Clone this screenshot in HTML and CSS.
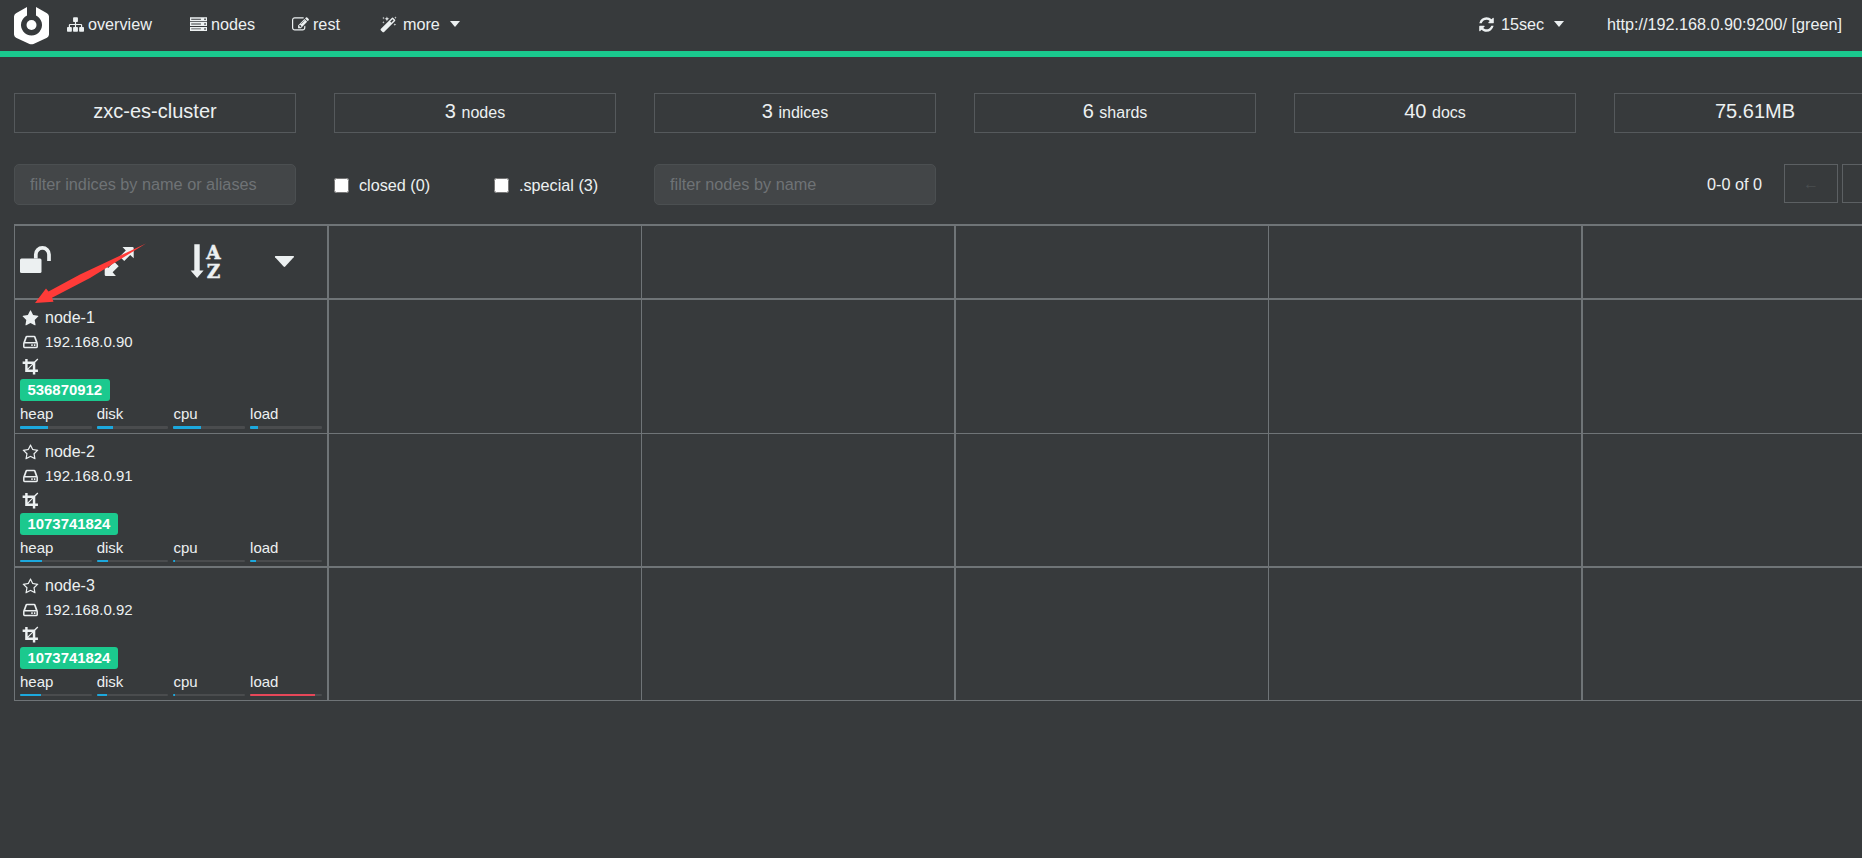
FILE: index.html
```
<!DOCTYPE html>
<html lang="en">
<head>
<meta charset="utf-8">
<title>cerebro</title>
<link rel="stylesheet" href="styles.css">
</head>
<body>
<svg class="defs" width="0" height="0">
  <symbol id="sitemap" viewBox="0 0 1792 1792"><path d="M1792 1248v320q0 40-28 68t-68 28h-320q-40 0-68-28t-28-68v-320q0-40 28-68t68-28h96v-192h-512v192h96q40 0 68 28t28 68v320q0 40-28 68t-68 28h-320q-40 0-68-28t-28-68v-320q0-40 28-68t68-28h96v-192h-512v192h96q40 0 68 28t28 68v320q0 40-28 68t-68 28h-320q-40 0-68-28t-28-68v-320q0-40 28-68t68-28h96v-192q0-52 38-90t90-38h512v-192h-96q-40 0-68-28t-28-68v-320q0-40 28-68t68-28h320q40 0 68 28t28 68v320q0 40-28 68t-68 28h-96v192h512q52 0 90 38t38 90v192h96q40 0 68 28t28 68z"/></symbol>
  <symbol id="server" viewBox="0 0 1792 1792"><path fill-rule="evenodd" d="M0 128h1792v416H0zM0 640h1792v416H0zM0 1152h1792v416H0zM128 288v96h1024v-96zM128 800v96h1024v-96zM128 1312v96h1024v-96zM1504 256h160v160h-160zM1504 768h160v160h-160zM1504 1280h160v160h-160z"/></symbol>
  <symbol id="edit" viewBox="0 0 1792 1792"><path d="M888 1184l116-116-152-152-116 116v56h96v96h56zm440-720q-16-16-33 1l-350 350q-17 17-1 33t33-1l350-350q17-17 1-33zm80 594v190q0 119-84.500 203.500t-203.500 84.500h-832q-119 0-203.500-84.500t-84.500-203.500v-832q0-119 84.500-203.500t203.500-84.500h832q63 0 117 25 15 7 18 23 3 17-9 29l-49 49q-14 14-32 8-23-6-45-6h-832q-66 0-113 47t-47 113v832q0 66 47 113t113 47h832q66 0 113-47t47-113v-126q0-13 9-22l64-64q15-15 35-7t20 29zm-96-738l288 288-672 672h-288v-288zm444 132l-92 92-288-288 92-92q28-28 68-28t68 28l152 152q28 28 28 68t-28 68z"/></symbol>
  <symbol id="magic" viewBox="0 0 16 16"><path fill-rule="evenodd" d="M11.300 1.700q.5-.4 1 0l1.900 1.900q.4.500 0 1L3.600 15.200q-.5.400-1 0L.7 13.300q-.4-.5 0-1zM11.800 3L9.600 5.200l1.100 1.100 2.200-2.200zM3.200.600l.3 1 1 .3-1 .3-.3 1-.3-1-1-.3 1-.3zM6.500.500l.7 1.600 1.600.6-1.600.6-.7 1.600-.6-1.600-1.700-.6 1.700-.6zM3.200 4.600l.3 1 1 .3-1 .3-.3 1-.3-1-1-.3 1-.3zM14.500.300l.3 1 1 .3-1 .3-.3 1-.3-1-1-.3 1-.3zM14 6.800l.3 1 1 .3-1 .3-.3 1-.3-1-1-.3 1-.3z"/></symbol>
  <symbol id="refresh" viewBox="0 0 1792 1792"><path d="M1639 1056q0 5-1 7-64 268-268 434.500t-478 166.500q-146 0-282.500-55t-243.500-157l-129 129q-19 19-45 19t-45-19-19-45v-448q0-26 19-45t45-19h448q26 0 45 19t19 45-19 45l-137 137q71 66 161 102t187 36q134 0 250-65t186-179q11-17 53-117 8-23 30-23h192q13 0 22.500 9.500t9.500 22.500zm25-800v448q0 26-19 45t-45 19h-448q-26 0-45-19t-19-45 19-45l138-138q-148-137-349-137-134 0-250 65t-186 179q-11 17-53 117-8 23-30 23h-199q-13 0-22.500-9.500t-9.500-22.500v-7q65-268 270-434.500t480-166.500q146 0 284 55.500t245 156.500l130-129q19-19 45-19t45 19 19 45z"/></symbol>
  <symbol id="star" viewBox="0 0 1792 1792"><path d="M1728 647q0 22-26 48l-363 354 86 500q1 7 1 20 0 21-10.500 35.500t-30.500 14.500q-19 0-40-12l-449-236-449 236q-22 12-40 12-21 0-31.500-14.500t-10.500-35.500q0-6 2-20l86-500-364-354q-25-27-25-48 0-37 56-46l502-73 225-455q19-41 49-41t49 41l225 455 502 73q56 9 56 46z"/></symbol>
  <symbol id="star-o" viewBox="0 0 1792 1792"><path d="M1201 1004l306-297-422-62-189-382-189 382-422 62 306 297-73 421 378-199 377 199zm527-357q0 22-26 48l-363 354 86 500q1 7 1 20 0 50-41 50-19 0-40-12l-449-236-449 236q-22 12-40 12-21 0-31.500-14.500t-10.500-35.500q0-6 2-20l86-500-364-354q-25-27-25-48 0-37 56-46l502-73 225-455q19-41 49-41t49 41l225 455 502 73q56 9 56 46z"/></symbol>
  <symbol id="hdd" viewBox="0 0 16 16"><path fill-rule="evenodd" d="M3.200 2.700Q3.500 1.700 4.600 1.700h6.800q1.100 0 1.400 1l1.900 5q.3.700.3 1.400v2.800q0 1.400-1.400 1.400H2.400Q1 13.300 1 11.900V9.100q0-.7.3-1.400zM4.700 3.100L3.100 7.500h9.800l-1.600-4.400zM2.400 8.900v3h11.200v-3zM8.700 9.700h1.400v1.500H8.700zM11.200 9.700h1.400v1.500h-1.400z"/></symbol>
  <symbol id="crop" viewBox="0 0 16 16"><path fill-rule="evenodd" d="M3 1h2.300v2.300h6.200L14.500.500l.8.800-2.800 3v6.500H15v2.300h-2.500v2.400h-2.300v-2.400H3V5.600H.6V3.300H3zM5.300 5.600v4.200l4.200-4.200zM10.200 6.400l-4.300 4.400h4.300z"/></symbol>
</svg>

<nav class="navbar">
  <svg class="logo" width="36" height="38" viewBox="0 0 36 38"><path fill="#fff" d="M13 0L2 6.300Q0 7.500 0 9.500v18q0 2 2 3.200l13.500 6.200q2 .9 4 0L33 30.700q2-1.200 2-3.200v-18q0-2-2-3.200L22 0v8.500a10.500 10.500 0 1 1-9 0z"/><circle cx="17.500" cy="18" r="5" fill="#fff"/></svg>
  <a class="item overview"><svg class="ico"><use href="#sitemap"/></svg>overview</a>
  <a class="item nodes"><svg class="ico"><use href="#server"/></svg>nodes</a>
  <a class="item rest"><svg class="ico"><use href="#edit"/></svg>rest</a>
  <a class="item more"><svg class="ico"><use href="#magic"/></svg>more<i class="caret"></i></a>
  <a class="item interval"><svg class="ico"><use href="#refresh"/></svg>15sec<i class="caret"></i></a>
  <a class="item host">http://192.168.0.90:9200/ [green]</a>
</nav>

<main>
  <section class="stats">
    <div class="stat">zxc-es-cluster</div>
    <div class="stat">3 <small>nodes</small></div>
    <div class="stat">3 <small>indices</small></div>
    <div class="stat">6 <small>shards</small></div>
    <div class="stat">40 <small>docs</small></div>
    <div class="stat">75.61MB</div>
  </section>

  <section class="filters">
    <input class="field" placeholder="filter indices by name or aliases">
    <label class="check"><input type="checkbox">closed (0)</label>
    <label class="check"><input type="checkbox">.special (3)</label>
    <input class="field" placeholder="filter nodes by name">
    <div class="pager"><span>0-0 of 0</span><button>←</button><button></button></div>
  </section>

  <section class="grid">
    <div class="row head">
      <div class="cell tools">
        <svg width="312" height="72" viewBox="15 226 312 72">
          <rect x="20" y="258.500" width="21.500" height="14.500" rx="1.500"/>
          <path d="M35.800 258.500v-4a6.600 6.600 0 0 1 13.200 0v6.500" fill="none" stroke="#ecf0f1" stroke-width="3.700"/>
          <path d="M122.500 247h10q1.200 0 1.200 1.200v10l-3.500-3.200-6 6.100-4.500-4.500 6.100-6zM106 276q-1.300 0-1.300-1.300v-10l3.500 3.200 6-6.100 4.500 4.500-6.100 6 3.300 3.700z"/>
          <path d="M194.300 244.300h5.400v26.200h3.900l-6.500 7.500-6.500-7.500h3.700z"/>
          <text class="letter" x="213.500" y="258.700" text-anchor="middle">A</text>
          <text class="letter" x="213.500" y="277.700" text-anchor="middle">Z</text>
          <path d="M275.500 256h18q1 .3.200 1.200l-8.500 9.300q-.8.800-1.600 0l-8.500-9.300q-.7-.9.400-1.200z"/>
        </svg>
      </div>
      <div class="cell"></div><div class="cell"></div><div class="cell"></div><div class="cell"></div><div class="cell"></div>
    </div>
    <div class="row r1">
      <div class="cell node">
        <div class="line name"><svg class="ico"><use href="#star"/></svg>node-1</div>
        <div class="line"><svg class="ico"><use href="#hdd"/></svg>192.168.0.90</div>
        <div class="line"><svg class="ico"><use href="#crop"/></svg></div>
        <span class="badge">536870912</span>
        <div class="meters">
          <div class="meter">heap<i><b style="width:28px"></b></i></div>
          <div class="meter">disk<i><b style="width:16px"></b></i></div>
          <div class="meter">cpu<i><b style="width:28px"></b></i></div>
          <div class="meter">load<i><b style="width:8px"></b></i></div>
        </div>
      </div>
      <div class="cell"></div><div class="cell"></div><div class="cell"></div><div class="cell"></div><div class="cell"></div>
    </div>
    <div class="row r2">
      <div class="cell node">
        <div class="line name"><svg class="ico"><use href="#star-o"/></svg>node-2</div>
        <div class="line"><svg class="ico"><use href="#hdd"/></svg>192.168.0.91</div>
        <div class="line"><svg class="ico"><use href="#crop"/></svg></div>
        <span class="badge">1073741824</span>
        <div class="meters">
          <div class="meter">heap<i><b style="width:22px"></b></i></div>
          <div class="meter">disk<i><b style="width:11px"></b></i></div>
          <div class="meter">cpu<i><b style="width:2px"></b></i></div>
          <div class="meter">load<i><b style="width:6px"></b></i></div>
        </div>
      </div>
      <div class="cell"></div><div class="cell"></div><div class="cell"></div><div class="cell"></div><div class="cell"></div>
    </div>
    <div class="row r3">
      <div class="cell node">
        <div class="line name"><svg class="ico"><use href="#star-o"/></svg>node-3</div>
        <div class="line"><svg class="ico"><use href="#hdd"/></svg>192.168.0.92</div>
        <div class="line"><svg class="ico"><use href="#crop"/></svg></div>
        <span class="badge">1073741824</span>
        <div class="meters">
          <div class="meter">heap<i><b style="width:21px"></b></i></div>
          <div class="meter">disk<i><b style="width:10px"></b></i></div>
          <div class="meter">cpu<i><b style="width:2px"></b></i></div>
          <div class="meter">load<i><b class="danger" style="width:65px"></b></i></div>
        </div>
      </div>
      <div class="cell"></div><div class="cell"></div><div class="cell"></div><div class="cell"></div><div class="cell"></div>
    </div>
    <svg class="arrow" width="112" height="62" viewBox="35 242 112 62"><path fill="#ff3b38" d="M146 243.500L80 274.500 48.500 291.500 46 288.500 35 303l18.500-1.300-1.500-4L90 278z"/></svg>
  </section>
</main>
</body>
</html>
```
FILE: styles.css
```
* { box-sizing: border-box; }
html, body { margin: 0; height: 100%; overflow: hidden; }
body {
  background: #373a3c;
  color: #ecf0f1;
  font: 16.2px/24px "Liberation Sans", Arial, sans-serif;
}
.defs { display: block; }
svg { fill: #ecf0f1; flex: none; }
.ico { width: 17px; height: 17px; }

.navbar {
  display: flex;
  align-items: flex-start;
  height: 57px;
  padding: 7px 0 0 14px;
  border-bottom: 6px solid #1ac98e;
}
.item { display: flex; align-items: center; height: 24px; margin-top: 5px; white-space: nowrap; }
.item .ico { margin-right: 4px; }
.overview { margin-left: 17px; }
.nodes { margin-left: 38px; }
.rest { margin-left: 37px; }
.more { margin-left: 40px; }
.more .ico, .interval .ico { margin-right: 6px; }
.caret { border: 5.500px solid transparent; border-top: 6px solid #ecf0f1; border-bottom: 0; margin-left: 10px; }
.interval { margin-left: auto; }
.host { margin: 5px 20px 0 43px; }

main { padding: 36px 0 0 14px; }
.stats { display: grid; grid-template-columns: repeat(6, 282px); column-gap: 38px; }
.stat {
  height: 40px;
  border: 1px solid #55595c;
  text-align: center;
  font-size: 20px;
  line-height: 35px;
}
.stat small { font-size: 16px; }

.filters { display: flex; align-items: flex-start; margin-top: 31px; height: 60px; }
.field {
  flex: none;
  width: 282px;
  height: 41px;
  padding: 0 15px;
  border: 1px solid #4b4f51;
  border-radius: 5px;
  background: #434648;
  font: 16.25px "Liberation Sans", Arial, sans-serif;
}
.field::placeholder { color: #6f7376; opacity: 1; }
.check { display: flex; flex: none; align-items: center; width: 160px; height: 41px; padding-top: 1px; }
.check input { width: 15px; height: 15px; margin: 1px 10px 0 0; }
.field + .check { margin-left: 38px; }
.pager { display: flex; flex: none; margin-left: 771px; }
.pager span { width: 77px; line-height: 41px; flex: none; white-space: nowrap; }
.pager button {
  flex: none;
  width: 54px;
  height: 39px;
  margin-right: 4px;
  border: 1px solid #5c6063;
  background: none;
  color: #4a4e50;
  font: 16px "Liberation Sans", Arial, sans-serif;
}

.grid { position: relative; width: 1881px; border-left: 1px solid #6f7477; }
.row { display: grid; grid-template-columns: 314px 313px 314px 313px 314px 312px; border-top: 2px solid #6f7477; }
.cell { border-right: 2px solid #6f7477; }
.cell:nth-child(2), .cell:nth-child(4) { border-right-width: 1px; }
.head { height: 74px; }
.tools svg { display: block; }
.r1 { height: 135px; }
.r2 { height: 133px; border-top-width: 1px; }
.r3 { height: 135px; border-bottom: 1px solid #6f7477; }
.letter { font: bold 18.5px "DejaVu Serif", serif; stroke: #ecf0f1; stroke-width: .5px; }

.node { padding: 6px 5px 0; font-size: 15px; }
.line { display: flex; align-items: center; height: 24px; padding-left: 2px; }
.line .ico { margin-right: 6px; }
.name { font-size: 16px; }
.badge {
  display: block;
  width: max-content;
  height: 22px;
  margin-top: 1px;
  padding: 0 7.500px;
  border-radius: 3px;
  background: #1bc98e;
  color: #fff;
  font-weight: bold;
  font-size: 14.900px;
  line-height: 22px;
}
.meters { display: flex; gap: 5px; margin-top: 2px; }
.meter { width: 71.700px; line-height: 22px; }
.meter i { display: block; height: 3px; margin-top: 1px; border-radius: 1px; background: #4a4c4e; overflow: hidden; }
.r2 .meter i, .r3 .meter i { height: 2px; }
.meter b { display: block; height: 100%; background: #1ca8dd; }
.meter .danger { background: #e64759; }
.arrow { position: absolute; left: 20px; top: 18px; }
```
